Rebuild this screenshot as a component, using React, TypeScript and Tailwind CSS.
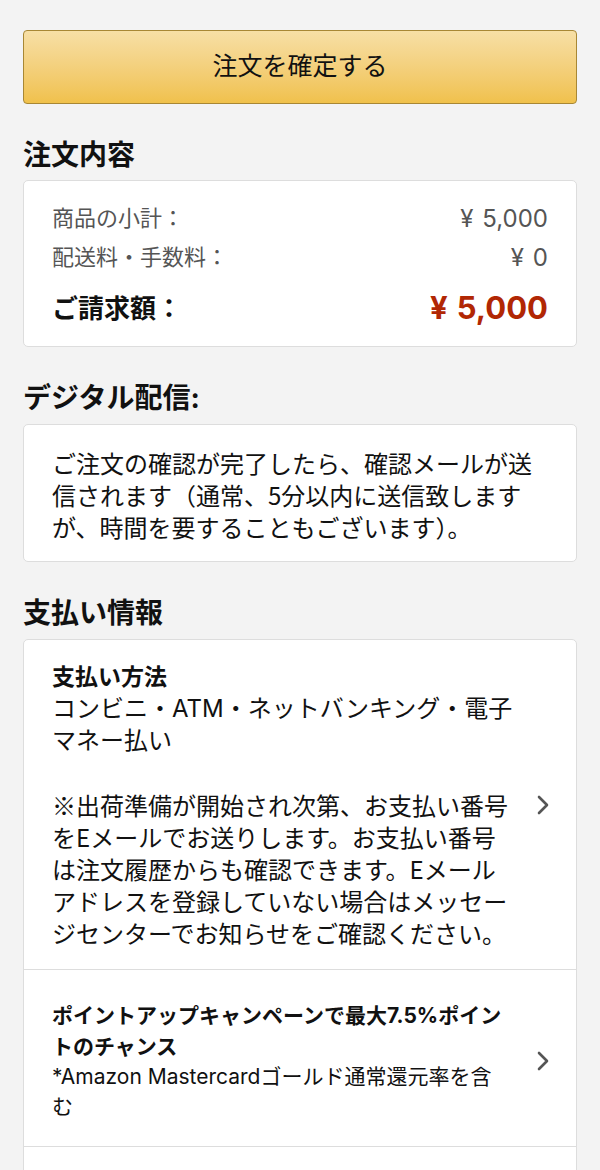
import { ReactNode } from 'react';

function Chevron() {
  return (
    <svg width="14" height="20" viewBox="0 0 14 20" className="shrink-0">
      <polyline points="3,2 11,10 3,18" fill="none" stroke="#555" strokeWidth="2.6" strokeLinecap="round" strokeLinejoin="round" />
    </svg>
  );
}

function SectionTitle({ children }: { children: ReactNode }) {
  return <h2 className="mt-[33px] mb-[8px] text-[28px] leading-[36px] font-bold text-[#111]">{children}</h2>;
}

function Yen({ amount, className }: { amount: string; className?: string }) {
  return (
    <span className={`flex items-baseline gap-[9px] ${className ?? ''}`}>
      <span>¥</span>
      <span>{amount}</span>
    </span>
  );
}

export default function App() {
  return (
    <div className="min-h-screen bg-[#f3f3f3] px-[23px] pt-[30px] font-[Inter,Noto_Sans_CJK_JP,sans-serif] text-[#111]">
      {/* Place order */}
      <button className="flex h-[74px] w-full items-center justify-center rounded-[4px] border border-[#a88734] bg-gradient-to-b from-[#f7dfa5] to-[#f0c14b] text-[25px] text-[#111]">
        注文を確定する
      </button>

      <h2 className="mt-[33px] mb-[7px] text-[28px] leading-[36px] font-bold">注文内容</h2>
      <div className="rounded-[5px] border border-[#ddd] bg-white px-[28px] pt-[18px] pb-[16px]">
        <div className="flex h-[39px] items-center justify-between text-[#555]">
          <span className="text-[22px]">商品の小計：</span>
          <Yen amount="5,000" className="text-[24px]" />
        </div>
        <div className="flex h-[39px] items-center justify-between text-[#555]">
          <span className="text-[22px]">配送料・手数料：</span>
          <Yen amount="0" className="text-[24px]" />
        </div>
        <div className="mt-[9px] flex h-[44px] items-center justify-between">
          <span className="text-[26px] font-bold">ご請求額：</span>
          <Yen amount="5,000" className="text-[31px] font-bold text-[#b12704]" />
        </div>
      </div>

      <SectionTitle>デジタル配信:</SectionTitle>
      <div className="rounded-[5px] border border-[#ddd] bg-white px-[28px] pt-[22px] pb-[18px]">
        <p className="font-[Noto_Sans_CJK_JP,sans-serif] text-[24px] leading-[32px]">
          ご注文の確認が完了したら、確認メールが送信されます（通常、5分以内に送信致しますが、時間を要することもございます）。
        </p>
      </div>

      <SectionTitle>支払い情報</SectionTitle>
      <div className="overflow-hidden rounded-[5px] border border-[#ddd] bg-white">
        <div className="flex items-center justify-between pl-[28px] pr-[26px] pt-[21px] pb-[20px]">
          <div className="w-[465px] text-[24px] leading-[32px]">
            <div className="text-[23px] font-bold">支払い方法</div>
            <p>コンビニ・ATM・ネットバンキング・電子マネー払い</p>
            <p className="mt-[32px] font-[Noto_Sans_CJK_JP,sans-serif]">
              ※出荷準備が開始され次第、お支払い番号をEメールでお送りします。お支払い番号は注文履歴からも確認できます。Eメールアドレスを登録していない場合はメッセージセンターでお知らせをご確認ください。
            </p>
          </div>
          <Chevron />
        </div>

        <div className="flex items-center justify-between border-t border-[#ddd] pl-[28px] pr-[26px] pt-[30px] pb-[24px]">
          <div className="w-[455px]">
            <div className="text-[21px] leading-[31px] font-bold">ポイントアップキャンペーンで最大7.5%ポイントのチャンス</div>
            <div className="text-[21px] leading-[30px]">*Amazon Mastercardゴールド通常還元率を含む</div>
          </div>
          <Chevron />
        </div>

        <div className="h-[80px] border-t border-[#ddd]" />
      </div>
    </div>
  );
}
